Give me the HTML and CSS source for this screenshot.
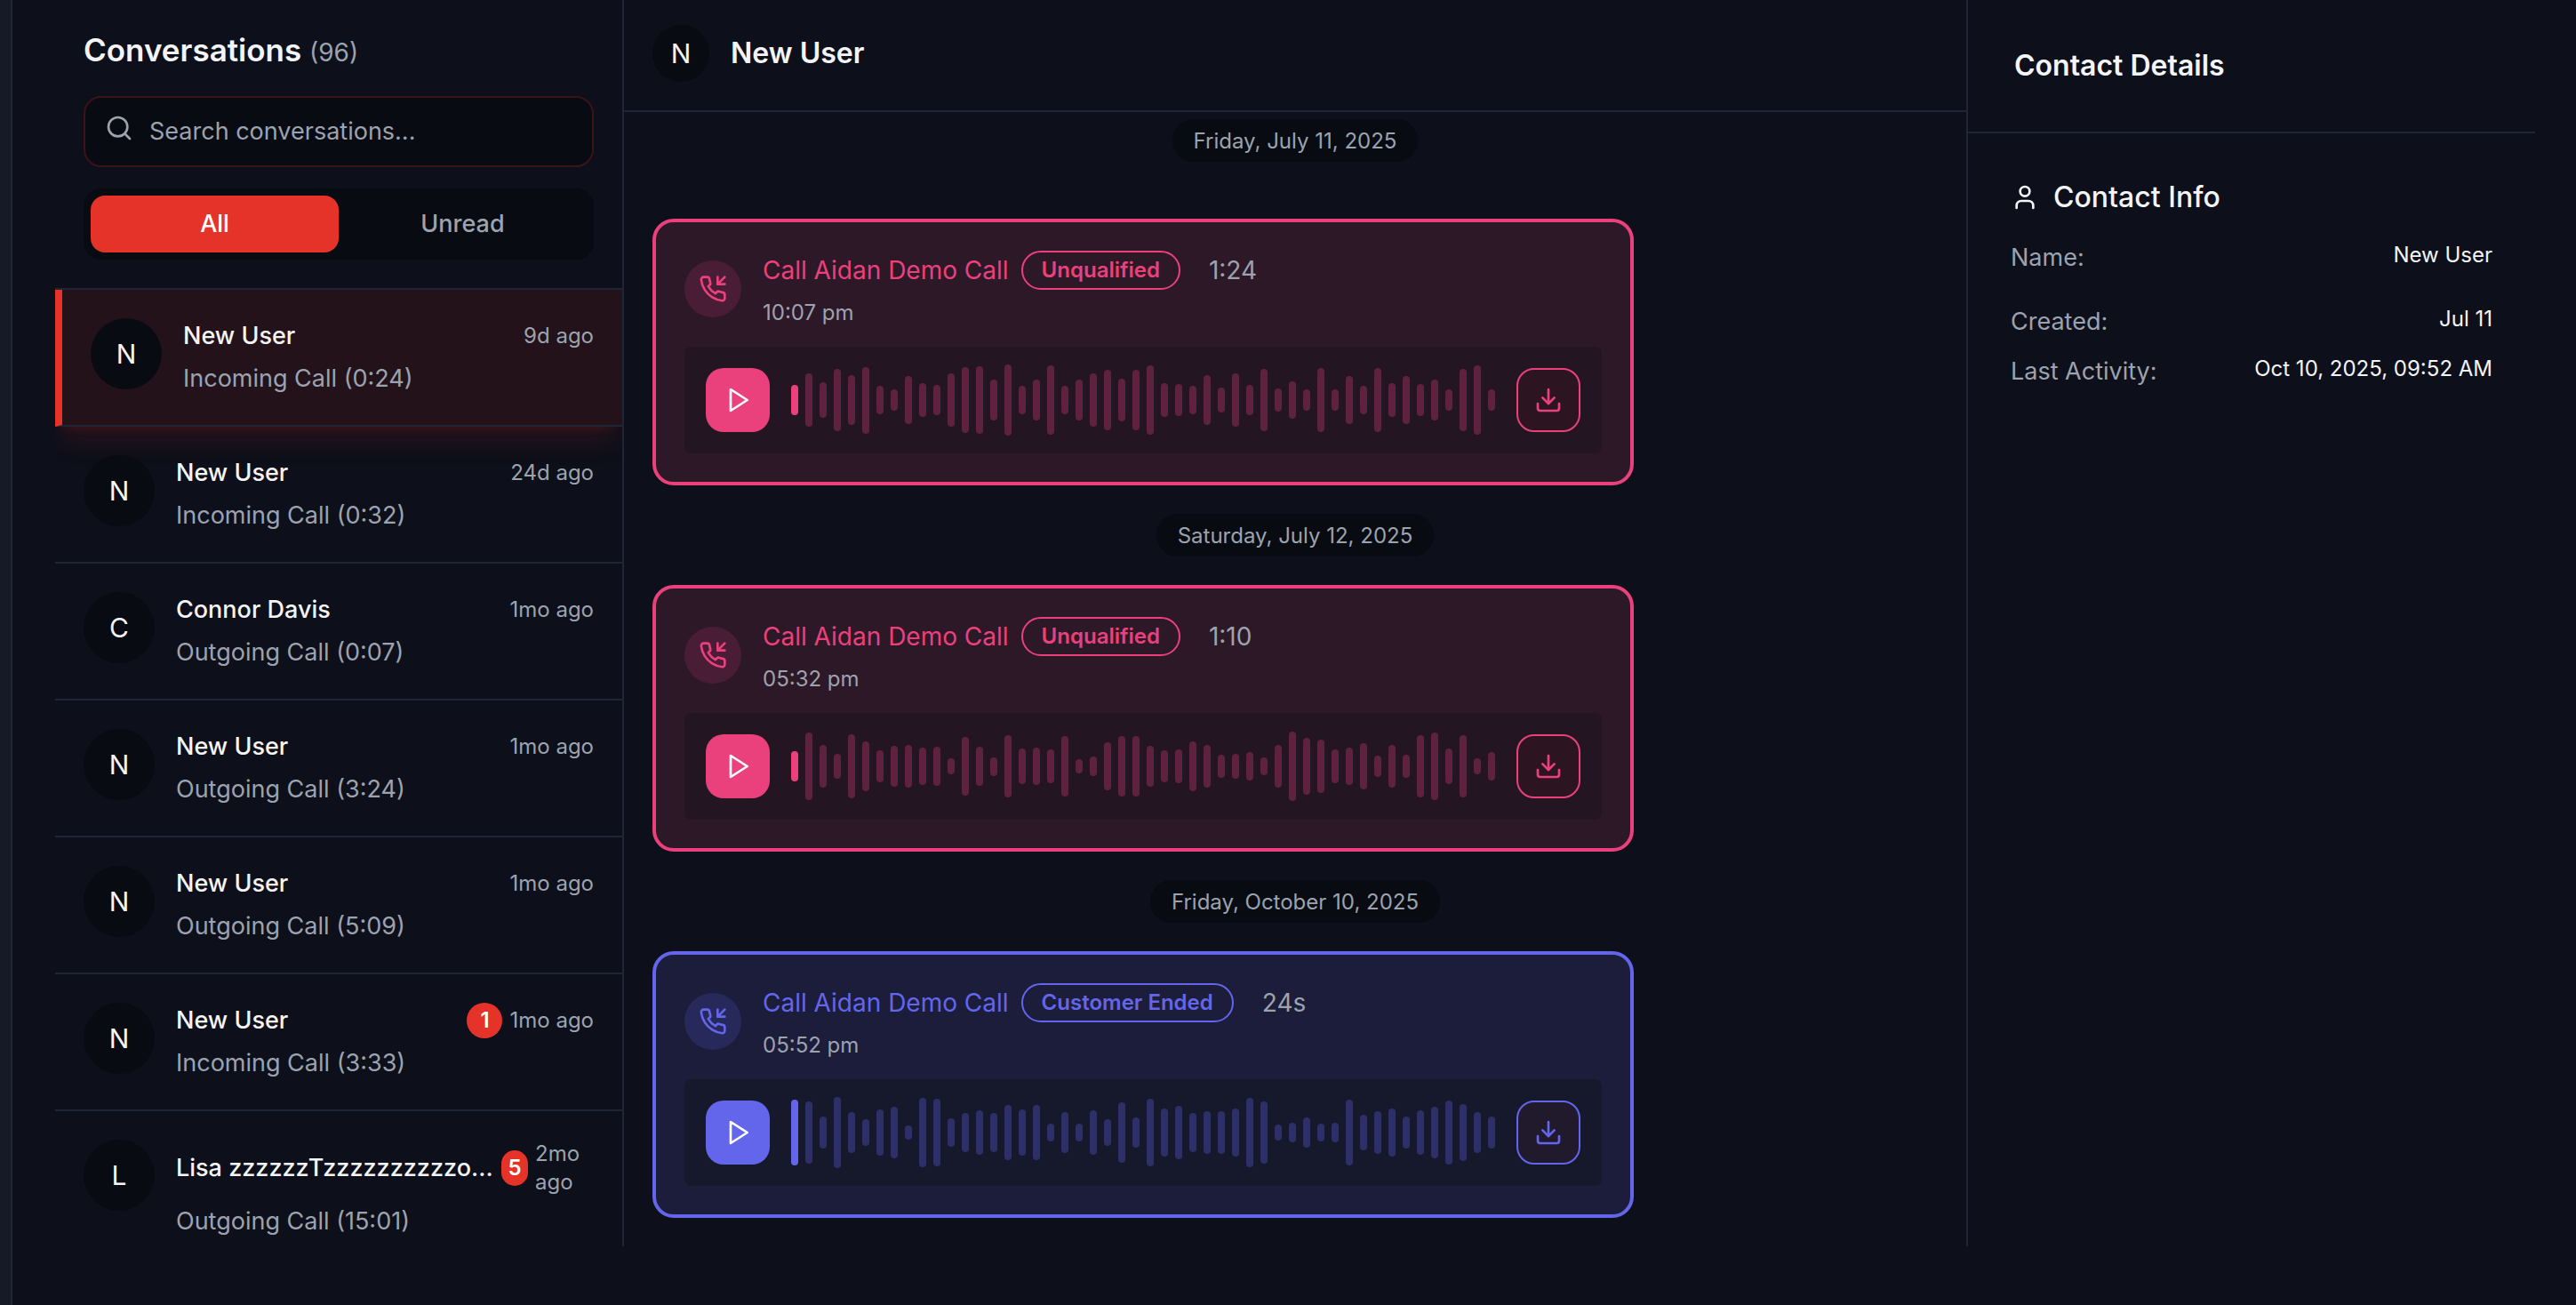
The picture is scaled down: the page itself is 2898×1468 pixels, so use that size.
FILE: index.html
```html
<!DOCTYPE html>
<html lang="en">
<head>
<meta charset="utf-8">
<meta name="viewport" content="width=device-width, initial-scale=1">
<title>Conversations</title>
<link rel="stylesheet" href="styles.css">
</head>
<body>
<svg class="sprite" aria-hidden="true">
  <symbol id="i-search" viewBox="0 0 24 24"><circle cx="11" cy="11" r="8"/><path d="m21 21-4.3-4.3"/></symbol>
  <symbol id="i-user" viewBox="0 0 24 24"><path d="M19 21v-2a4 4 0 0 0-4-4H9a4 4 0 0 0-4 4v2"/><circle cx="12" cy="7" r="4"/></symbol>
  <symbol id="i-play" viewBox="0 0 24 24"><polygon points="6 3 20 12 6 21 6 3"/></symbol>
  <symbol id="i-download" viewBox="0 0 24 24"><path d="M21 15v4a2 2 0 0 1-2 2H5a2 2 0 0 1-2-2v-4"/><polyline points="7 10 12 15 17 10"/><line x1="12" x2="12" y1="15" y2="3"/></symbol>
  <symbol id="i-incoming" viewBox="0 0 24 24"><polyline points="16 2 16 8 22 8"/><line x1="22" x2="16" y1="2" y2="8"/><path d="M22 16.92v3a2 2 0 0 1-2.18 2 19.79 19.79 0 0 1-8.63-3.07 19.5 19.5 0 0 1-6-6 19.79 19.79 0 0 1-3.07-8.67A2 2 0 0 1 4.11 2h3a2 2 0 0 1 2 1.72 12.84 12.84 0 0 0 .7 2.81 2 2 0 0 1-.45 2.11L8.09 9.91a16 16 0 0 0 6 6l1.27-1.27a2 2 0 0 1 2.11-.45 12.84 12.84 0 0 0 2.81.7A2 2 0 0 1 22 16.92z"/></symbol>
</svg>
<div class="app">
  <div class="rail"></div>
  <div class="workspace">
    <aside class="sidebar">
      <div class="sidebar-top">
        <h1 class="sidebar-title">Conversations <span class="count">(96)</span></h1>
        <div class="search">
          <svg class="icon"><use href="#i-search"/></svg>
          <input class="search-input" type="text" placeholder="Search conversations..." aria-label="Search conversations">
        </div>
        <div class="tabs">
          <button class="tab tab-active" type="button">All</button>
          <button class="tab" type="button">Unread</button>
        </div>
      </div>
      <ul class="conversations">
        <li class="conversation conversation-active">
          <span class="avatar">N</span>
          <div class="summary">
            <div class="summary-head"><span class="name">New User</span><span class="meta"><span class="ago">9d ago</span></span></div>
            <p class="preview">Incoming Call (0:24)</p>
          </div>
        </li>
        <li class="conversation">
          <span class="avatar">N</span>
          <div class="summary">
            <div class="summary-head"><span class="name">New User</span><span class="meta"><span class="ago">24d ago</span></span></div>
            <p class="preview">Incoming Call (0:32)</p>
          </div>
        </li>
        <li class="conversation">
          <span class="avatar">C</span>
          <div class="summary">
            <div class="summary-head"><span class="name">Connor Davis</span><span class="meta"><span class="ago">1mo ago</span></span></div>
            <p class="preview">Outgoing Call (0:07)</p>
          </div>
        </li>
        <li class="conversation">
          <span class="avatar">N</span>
          <div class="summary">
            <div class="summary-head"><span class="name">New User</span><span class="meta"><span class="ago">1mo ago</span></span></div>
            <p class="preview">Outgoing Call (3:24)</p>
          </div>
        </li>
        <li class="conversation">
          <span class="avatar">N</span>
          <div class="summary">
            <div class="summary-head"><span class="name">New User</span><span class="meta"><span class="ago">1mo ago</span></span></div>
            <p class="preview">Outgoing Call (5:09)</p>
          </div>
        </li>
        <li class="conversation">
          <span class="avatar">N</span>
          <div class="summary">
            <div class="summary-head"><span class="name">New User</span><span class="meta"><span class="badge">1</span><span class="ago">1mo ago</span></span></div>
            <p class="preview">Incoming Call (3:33)</p>
          </div>
        </li>
        <li class="conversation">
          <span class="avatar">L</span>
          <div class="summary">
            <div class="summary-head"><span class="name">Lisa zzzzzzTzzzzzzzzzzo...</span><span class="meta meta-tight"><span class="badge">5</span><span class="ago">2mo ago</span></span></div>
            <p class="preview">Outgoing Call (15:01)</p>
          </div>
        </li>
      </ul>
    </aside>

    <main class="chat">
      <header class="chat-header">
        <span class="avatar avatar-small">N</span>
        <h2 class="chat-title">New User</h2>
      </header>
      <div class="timeline">
        <div class="date date-first">Friday, July 11, 2025</div>
        <article class="call call-pink">
          <div class="call-head">
            <span class="call-icon"><svg class="icon"><use href="#i-incoming"/></svg></span>
            <div>
              <div class="call-line"><span class="call-name">Call Aidan Demo Call</span><span class="status">Unqualified</span><span class="duration">1:24</span></div>
              <p class="call-time">10:07 pm</p>
            </div>
          </div>
          <div class="player">
            <button class="play" type="button" aria-label="Play"><svg class="icon"><use href="#i-play"/></svg></button>
            <div class="wave" data-levels="34 60 40 70 56 75 32 24 54 38 34 60 74 76 46 80 32 46 78 32 46 60 68 48 68 78 38 36 32 56 28 60 34 70 26 42 24 72 24 54 32 72 38 54 36 46 24 70 78 24"></div>
            <button class="download" type="button" aria-label="Download"><svg class="icon"><use href="#i-download"/></svg></button>
          </div>
        </article>
        <div class="date">Saturday, July 12, 2025</div>
        <article class="call call-pink">
          <div class="call-head">
            <span class="call-icon"><svg class="icon"><use href="#i-incoming"/></svg></span>
            <div>
              <div class="call-line"><span class="call-name">Call Aidan Demo Call</span><span class="status">Unqualified</span><span class="duration">1:10</span></div>
              <p class="call-time">05:32 pm</p>
            </div>
          </div>
          <div class="player">
            <button class="play" type="button" aria-label="Play"><svg class="icon"><use href="#i-play"/></svg></button>
            <div class="wave" data-levels="34 76 48 28 72 56 36 46 48 42 44 18 66 44 21 70 40 42 38 68 16 22 54 68 68 46 36 38 56 48 26 28 32 20 48 78 64 60 38 42 52 24 48 26 70 76 40 70 18 32"></div>
            <button class="download" type="button" aria-label="Download"><svg class="icon"><use href="#i-download"/></svg></button>
          </div>
        </article>
        <div class="date">Friday, October 10, 2025</div>
        <article class="call call-indigo">
          <div class="call-head">
            <span class="call-icon"><svg class="icon"><use href="#i-incoming"/></svg></span>
            <div>
              <div class="call-line"><span class="call-name">Call Aidan Demo Call</span><span class="status">Customer Ended</span><span class="duration">24s</span></div>
              <p class="call-time">05:52 pm</p>
            </div>
          </div>
          <div class="player">
            <button class="play" type="button" aria-label="Play"><svg class="icon"><use href="#i-play"/></svg></button>
            <div class="wave" data-levels="74 70 36 80 46 30 52 58 16 78 76 32 44 50 44 62 52 62 20 46 20 50 30 68 34 76 54 60 44 48 48 54 78 70 18 22 34 20 22 74 40 48 54 36 50 58 72 64 46 36"></div>
            <button class="download" type="button" aria-label="Download"><svg class="icon"><use href="#i-download"/></svg></button>
          </div>
        </article>
      </div>
    </main>

    <aside class="details">
      <header class="details-header"><h2 class="details-title">Contact Details</h2></header>
      <section class="details-body">
        <h3 class="details-section"><svg class="icon"><use href="#i-user"/></svg>Contact Info</h3>
        <dl class="facts">
          <div class="fact fact-tall"><dt>Name:</dt><dd>New User</dd></div>
          <div class="fact"><dt>Created:</dt><dd>Jul 11</dd></div>
          <div class="fact"><dt>Last Activity:</dt><dd>Oct 10, 2025, 09:52 AM</dd></div>
        </dl>
      </section>
    </aside>
  </div>
</div>
<script src="script.js"></script>
</body>
</html>
```
FILE: styles.css
```css
:root {
  --bg: #0d0f1a;
  --well: #080b11;
  --line: #1f2436;
  --text: #f3f4f6;
  --muted: #9ca3af;
  --red: #e63329;
}
* { box-sizing: border-box; }
body {
  margin: 0;
  background: var(--bg);
  color: var(--text);
  font: 400 27px/40px Inter, sans-serif;
  overflow: hidden;
}
h1, h2, h3, p, ul, dl, dd { margin: 0; padding: 0; }
ul { list-style: none; }
button, input { font: inherit; }
.sprite { display: none; }
.icon {
  width: 32px;
  height: 32px;
  flex: none;
  fill: none;
  stroke: currentColor;
  stroke-width: 2;
  stroke-linecap: round;
  stroke-linejoin: round;
}

.app { display: flex; height: 100vh; }
.rail {
  flex: none;
  width: 14px;
  background: #141b27;
  border-right: 2px solid var(--line);
}
.workspace {
  flex: 1;
  display: grid;
  grid-template-columns: 640px minmax(0, 1fr) 640px;
  grid-template-rows: minmax(0, 1fr);
  padding: 0 46px 66px 48px;
}

/* Conversation list */
.sidebar {
  display: flex;
  flex-direction: column;
  border-right: 2px solid var(--line);
  overflow: hidden;
}
.sidebar-top {
  display: flex;
  flex-direction: column;
  gap: 24px;
  padding: 32px;
  border-bottom: 2px solid var(--line);
}
.sidebar-title {
  padding-bottom: 4px;
  font-size: 35px;
  line-height: 48px;
  font-weight: 600;
}
.count { font-size: 28px; line-height: 32px; font-weight: 400; color: var(--muted); }
.search {
  display: flex;
  gap: 18px;
  height: 80px;
  padding: 0 22px;
  background: var(--well);
  border: 2px solid #3a141a;
  border-radius: 20px;
  color: var(--muted);
}
.search .icon { margin-top: 18px; }
.search-input {
  flex: 1;
  min-width: 0;
  padding: 0;
  border: 0;
  outline: 0;
  background: none;
  color: var(--text);
}
.search-input::placeholder { color: var(--muted); opacity: 1; }
.tabs {
  display: grid;
  grid-template-columns: 1fr 1fr;
  height: 80px;
  padding: 8px;
  background: var(--well);
  border-radius: 20px;
}
.tab {
  border: 0;
  border-radius: 16px;
  background: none;
  color: var(--muted);
  font-weight: 500;
}
.tab-active { background: var(--red); color: #fff; }

.conversations { flex: 1; min-height: 0; overflow: hidden; }
.conversation {
  display: flex;
  gap: 24px;
  padding: 32px;
  border-bottom: 2px solid var(--line);
}
.conversation-active {
  border-left: 8px solid var(--red);
  background: #23121a;
  box-shadow: 0 20px 30px -6px rgb(230 51 41 / 14%), 0 8px 12px -8px rgb(230 51 41 / 14%);
}
.avatar {
  flex: none;
  display: grid;
  place-items: center;
  width: 80px;
  height: 80px;
  border-radius: 50%;
  background: var(--well);
  font-size: 30px;
}
.avatar-small { width: 64px; height: 64px; }
.summary { flex: 1; min-width: 0; }
.summary-head {
  display: flex;
  align-items: center;
  justify-content: space-between;
  gap: 8px;
  min-height: 40px;
  margin-bottom: 8px;
}
.name {
  font-weight: 500;
  min-width: 0;
  white-space: nowrap;
}
.meta { flex: none; display: flex; align-items: center; gap: 8px; }
.meta-tight { width: 104px; }
.ago { font-size: 24px; line-height: 32px; color: var(--muted); }
.badge {
  flex: none;
  display: grid;
  place-items: center;
  width: 40px;
  height: 40px;
  border-radius: 20px;
  background: var(--red);
  color: #fff;
  font-size: 24px;
  font-weight: 600;
}
.meta-tight .badge { width: 30px; }
.preview { color: var(--muted); }

/* Call timeline */
.chat { display: flex; flex-direction: column; min-width: 0; }
.chat-header {
  display: flex;
  align-items: center;
  gap: 24px;
  padding: 28px 32px 32px;
  border-bottom: 2px solid var(--line);
}
.chat-title { font-size: 32px; line-height: 48px; font-weight: 600; }
.timeline {
  display: flex;
  flex-direction: column;
  align-items: flex-start;
  gap: 32px;
  padding: 8px 32px 0;
}
.date {
  align-self: center;
  padding: 9px 24px 7px;
  border-radius: 24px;
  background: var(--well);
  color: var(--muted);
  font-size: 24px;
  line-height: 32px;
}
.date-first { margin-bottom: 32px; }
.call {
  padding: 32px;
  border: 4px solid var(--accent);
  border-radius: 24px;
  background: var(--card);
}
.call-pink {
  --accent: #ea417c;
  --card: #2d1828;
  --player: #241522;
  --bar: #5e2240;
  --disc: #4a1d36;
  --download: #2c1520;
}
.call-indigo {
  --accent: #6366eb;
  --card: #1b1d3b;
  --player: #16182c;
  --bar: #2d2f68;
  --disc: #27295a;
  --download: #21192c;
}
.call-head { display: flex; gap: 24px; padding-bottom: 22px; align-items: center; }
.call-icon {
  display: grid;
  place-items: center;
  width: 64px;
  height: 64px;
  border-radius: 50%;
  background: var(--disc);
  color: var(--accent);
}
.call-line { display: flex; align-items: center; gap: 14px; height: 44px; }
.call-name { color: var(--accent); font-size: 28px; }
.status {
  height: 44px;
  padding: 0 21px;
  border: 2px solid var(--accent);
  border-radius: 22px;
  color: var(--accent);
  font-size: 24px;
  line-height: 40px;
  font-weight: 600;
}
.duration { margin-left: 18px; color: var(--muted); font-size: 28px; }
.call-time { margin-top: 10px; font-size: 24px; line-height: 32px; color: var(--muted); }
.player {
  display: flex;
  align-items: center;
  gap: 24px;
  height: 120px;
  padding: 24px;
  border-radius: 8px;
  background: var(--player);
}
.play, .download {
  display: grid;
  place-items: center;
  width: 72px;
  height: 72px;
  padding: 0;
  border: 0;
  border-radius: 20px;
}
.play { background: var(--accent); color: #fff; }
.download {
  border: 2px solid var(--accent);
  background: var(--download);
  color: var(--accent);
}
.wave { display: flex; align-items: center; gap: 8px; height: 80px; }
.bar { width: 8px; border-radius: 4px; background: var(--bar); }
.bar:first-child { background: var(--accent); }

/* Contact details */
.details { border-left: 2px solid var(--line); }
.details-header { padding: 50px 52px; border-bottom: 2px solid var(--line); }
.details-title { font-size: 32px; line-height: 48px; font-weight: 600; }
.details-body { padding: 48px; }
.details-section {
  display: flex;
  align-items: center;
  gap: 16px;
  margin-bottom: 24px;
  font-size: 32px;
  line-height: 48px;
  font-weight: 500;
}
.facts { display: flex; flex-direction: column; gap: 16px; }
.fact { display: flex; justify-content: space-between; }
.fact-tall { min-height: 56px; }
.fact dt { color: var(--muted); }
.fact dd { font-size: 24px; line-height: 34px; }
```
FILE: script.js
```js
// Draws one bar per audio level in each recording's waveform.
document.querySelectorAll('.wave').forEach(function (wave) {
  wave.dataset.levels.split(' ').forEach(function (level) {
    var bar = document.createElement('span');
    bar.className = 'bar';
    bar.style.height = level + 'px';
    wave.appendChild(bar);
  });
});
```
